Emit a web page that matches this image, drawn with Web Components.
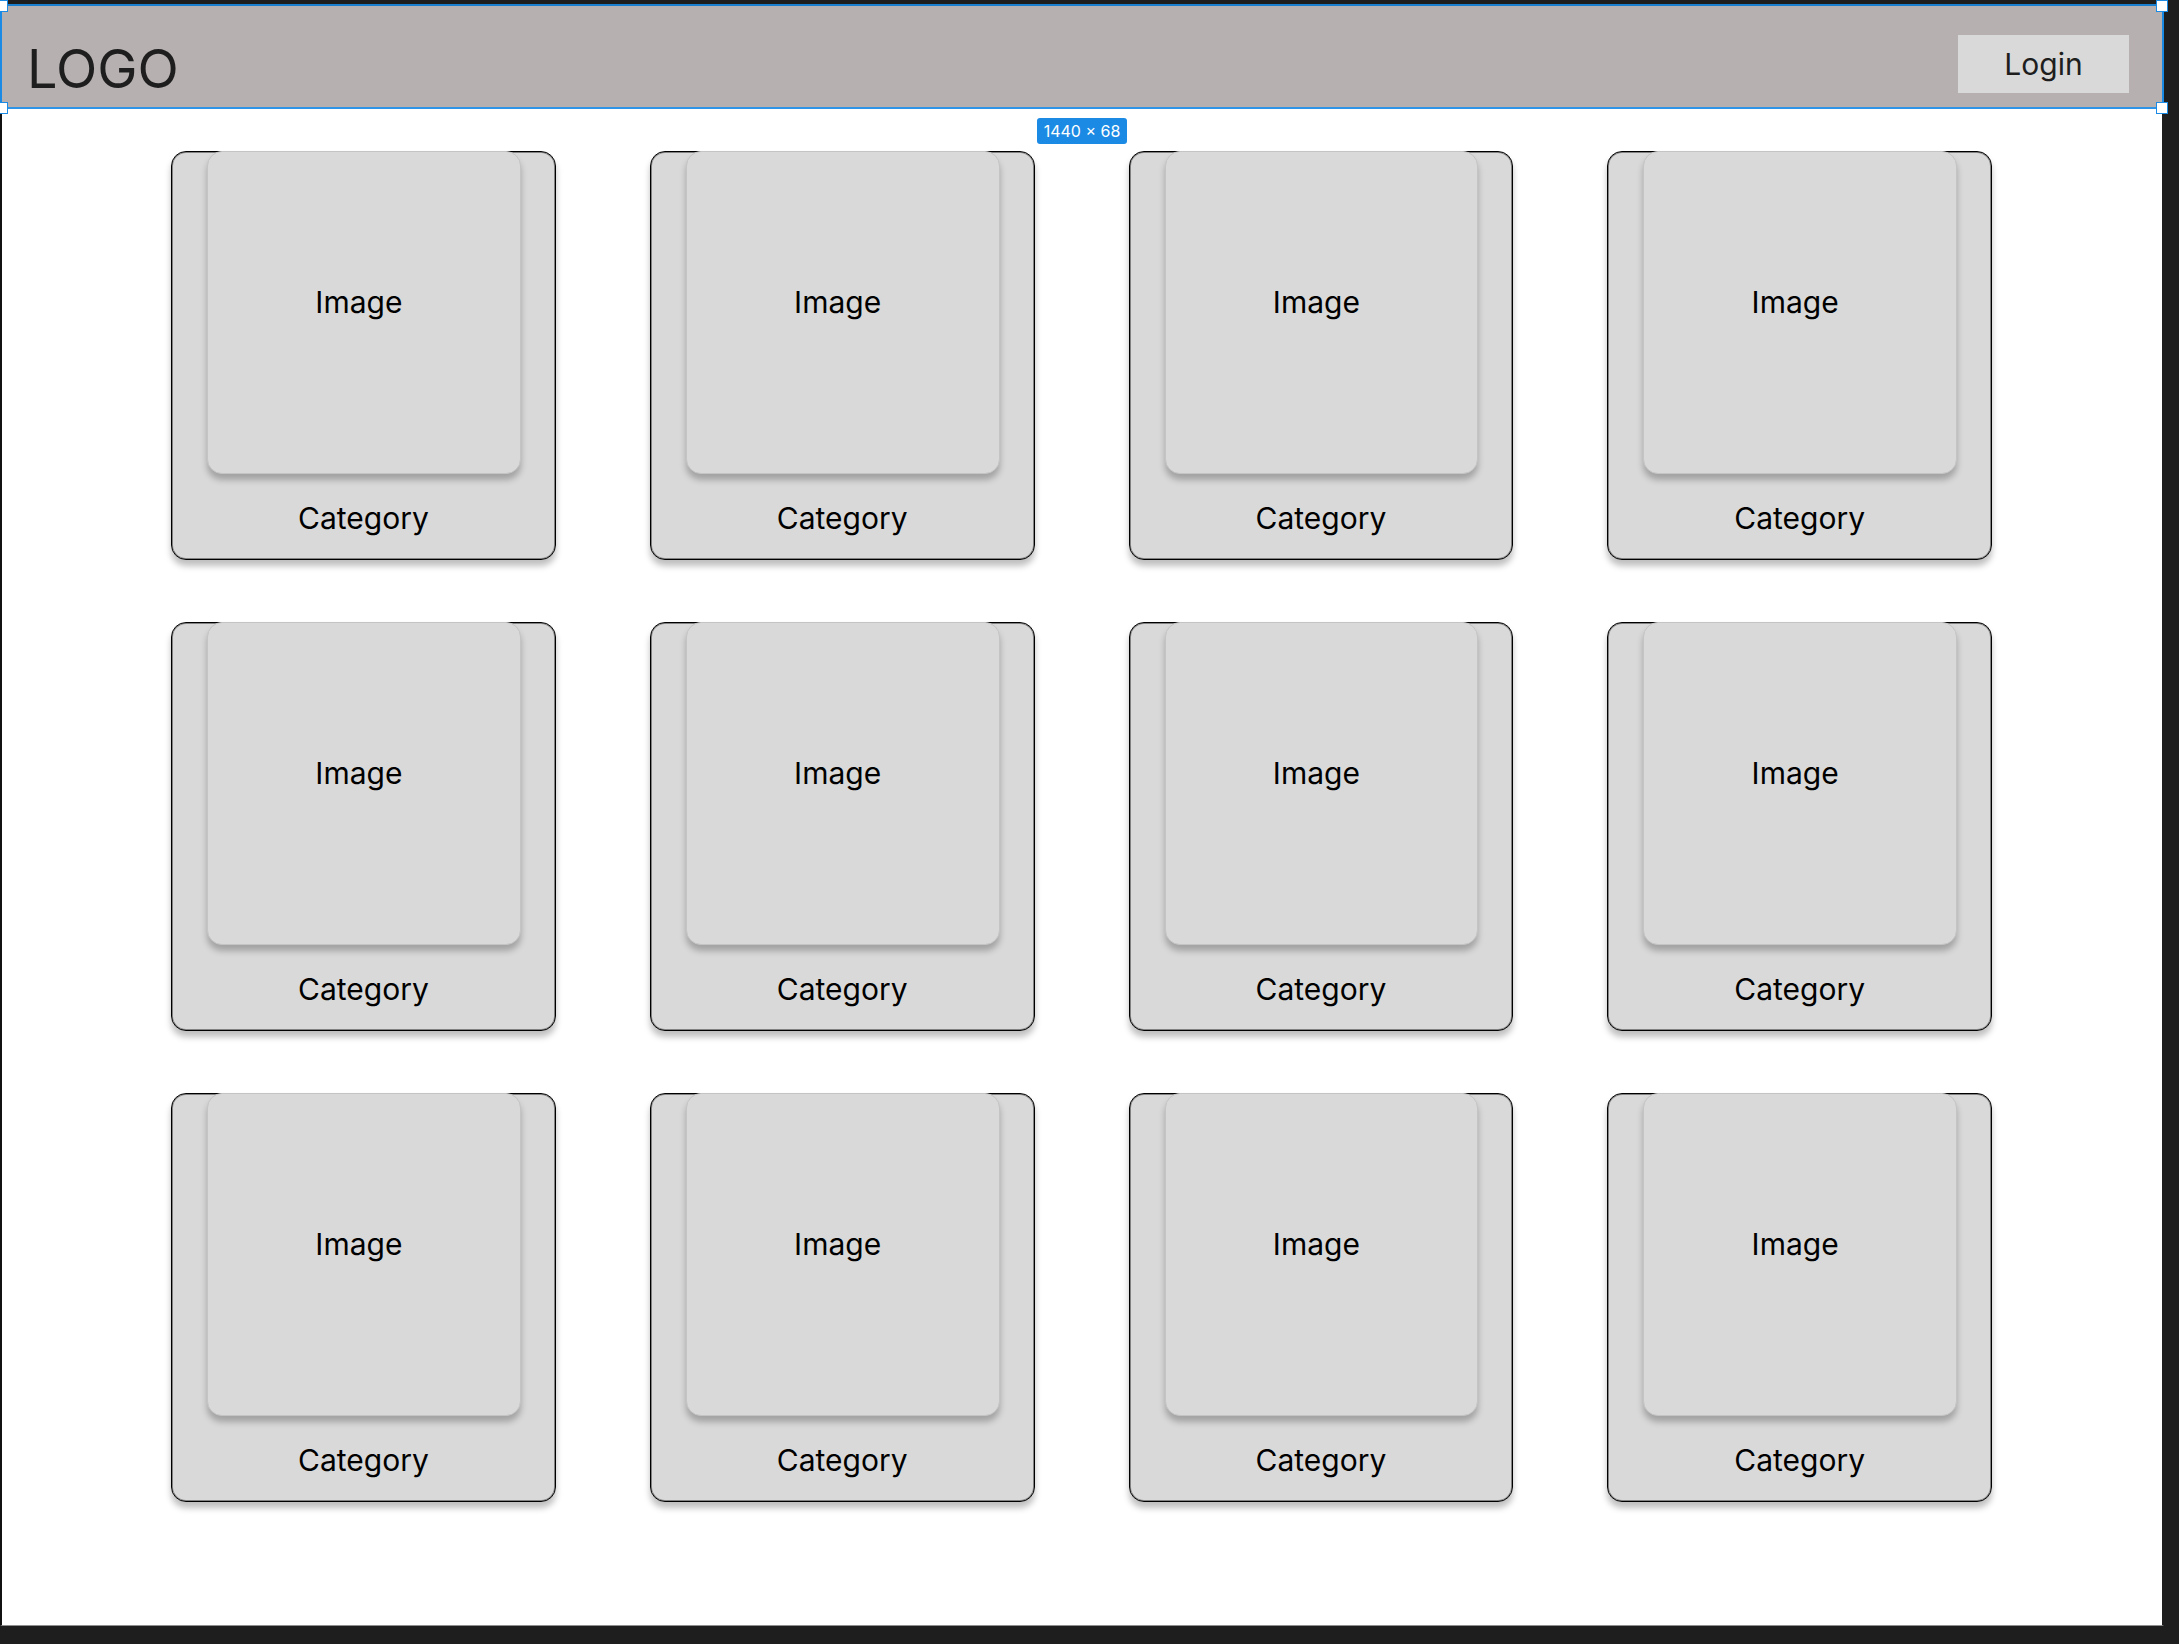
<!DOCTYPE html>
<html lang="en">
<head>
<meta charset="utf-8">
<title>Categories</title>
<style>
  html { min-height: 100%; background: #1e1e1e; }
  body { margin: 0; font-family: Inter, "Liberation Sans", sans-serif; font-size: 30px; line-height: 36px; color: #000; }
</style>
</head>
<body>
<design-canvas>
  <site-header slot="header">
    LOGO
    <login-button slot="action">Login</login-button>
    <size-badge slot="size">1440 × 68</size-badge>
  </site-header>
  <category-grid>
    <category-card>Category</category-card>
    <category-card>Category</category-card>
    <category-card>Category</category-card>
    <category-card>Category</category-card>
    <category-card>Category</category-card>
    <category-card>Category</category-card>
    <category-card>Category</category-card>
    <category-card>Category</category-card>
    <category-card>Category</category-card>
    <category-card>Category</category-card>
    <category-card>Category</category-card>
    <category-card>Category</category-card>
  </category-grid>
</design-canvas>
<script>
  const define = (name, html) => {
    const template = document.createElement('template');
    template.innerHTML = html;
    customElements.define(name, class extends HTMLElement {
      constructor() {
        super();
        this.attachShadow({ mode: 'open' }).append(template.content.cloneNode(true));
      }
    });
  };

  // Dark editor canvas around the white page frame
  define('design-canvas', `
    <style>
      :host { display: flex; flex-direction: column; box-sizing: border-box; min-height: 100vh; padding: 4px 15px 18px 0; background: #1e1e1e; overflow: hidden; }
      main { flex: 1; background: #fff; border-left: 2px solid #111; border-right: 2px solid #1e1e1e; border-bottom: 1px solid #8e8e8e; }
    </style>
    <slot name="header"></slot>
    <main><slot></slot></main>`);

  // Selected header with its four resize handles
  define('site-header', `
    <style>
      :host { display: block; }
      header { position: relative; display: flex; justify-content: space-between; align-items: flex-start; box-sizing: border-box; height: 105px; padding: 29px 33px 0 25px; background: #b7b0b0; border: 2px solid #1b8ae4; border-top-color: #1b7fd0; border-bottom-color: #2f93e6; color: #1e1e1e; }
      .logo { font-size: 54px; line-height: 68px; }
      i { position: absolute; box-sizing: border-box; width: 12px; height: 12px; background: #fff; border: 1px solid #1b8ae4; }
      .t { top: -6px; } .b { bottom: -7px; } .l { left: -6px; } .r { right: -6px; }
    </style>
    <header>
      <span class="logo"><slot></slot></span>
      <slot name="action"></slot>
      <i class="t l"></i><i class="t r"></i><i class="b l"></i><i class="b r"></i>
      <slot name="size"></slot>
    </header>`);

  define('login-button', `
    <style>
      :host { display: block; }
      button { display: block; width: 171px; height: 58px; padding: 0; border: 0; background: #d9d9d9; color: #1e1e1e; font: inherit; font-size: 30px; line-height: 36px; }
    </style>
    <button type="button"><slot></slot></button>`);

  // Dimension label that floats under the selection
  define('size-badge', `
    <style>
      :host { position: absolute; top: 112px; left: 50%; transform: translateX(-50%); box-sizing: border-box; width: 90px; height: 26px; border-radius: 3px; background: #1b8ae4; color: #fff; font-size: 16px; line-height: 26px; text-align: center; white-space: nowrap; }
    </style>
    <slot></slot>`);

  define('category-grid', `
    <style>
      :host { display: grid; grid-template-columns: repeat(4, minmax(0, 1fr)); gap: 62px 94px; padding: 42px 170px 64px 169px; }
    </style>
    <slot></slot>`);

  define('category-card', `
    <style>
      :host { display: block; }
      article { display: flex; flex-direction: column; box-sizing: border-box; height: 409px; border: 1px solid #000; border-radius: 15px; background: #d9d9d9; box-shadow: inset 0 0 0 1px rgba(0,0,0,.4), 0 6px 6px rgba(0,0,0,.25); }
      .image { display: flex; align-items: center; justify-content: center; box-sizing: border-box; height: 323px; margin: -1px 34px 0 35px; padding: 0 10px 22px 0; border: 1px solid #c4c4c4; border-radius: 15px; background: #d9d9d9; box-shadow: 0 6px 6px rgba(0,0,0,.25); }
      .name { margin-top: 26px; text-align: center; }
    </style>
    <article>
      <div class="image">Image</div>
      <div class="name"><slot></slot></div>
    </article>`);
</script>
</body>
</html>
